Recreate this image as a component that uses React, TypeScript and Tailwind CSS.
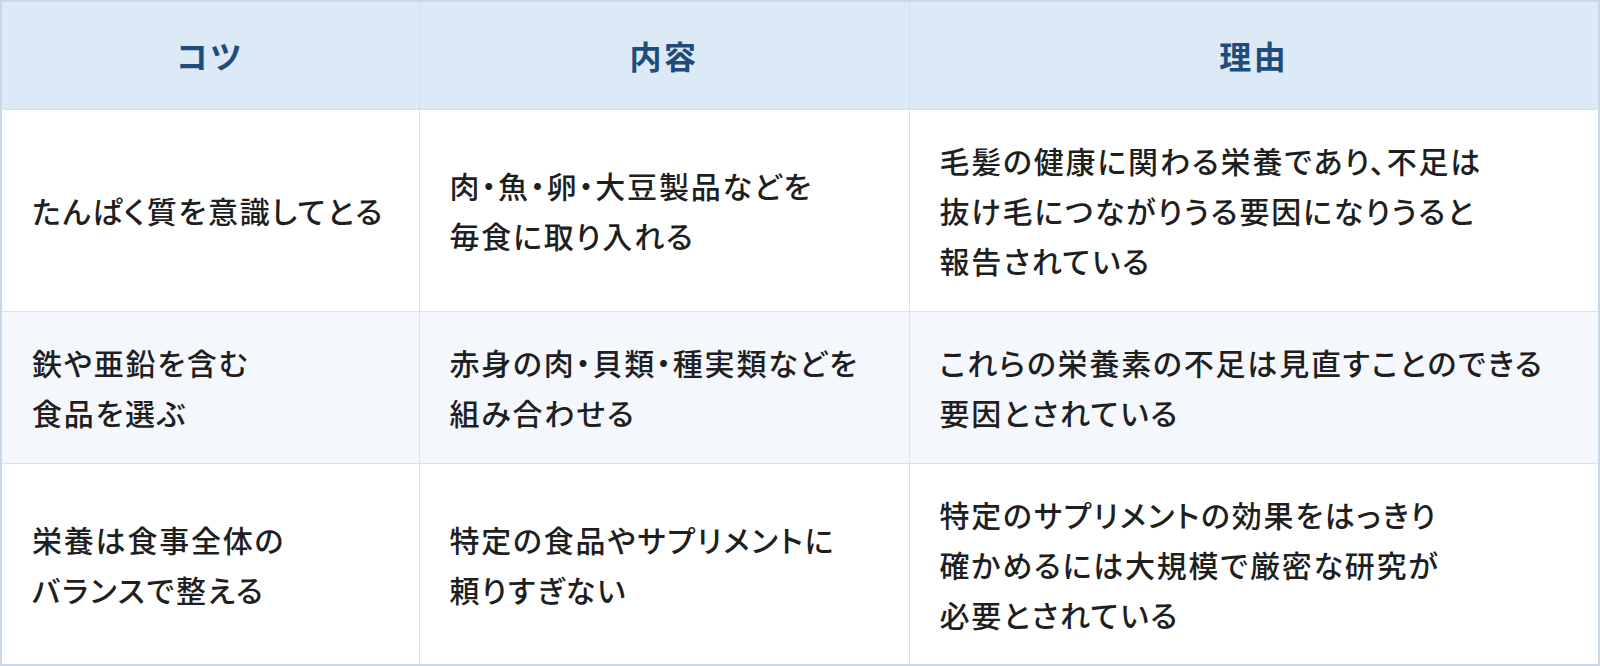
import React from 'react';

const rows: { tip: string[]; detail: string[]; reason: string[] }[] = [
  {
    tip: ['たんぱく質を意識してとる'],
    detail: ['肉・魚・卵・大豆製品などを', '毎食に取り入れる'],
    reason: ['毛髪の健康に関わる栄養であり、不足は', '抜け毛につながりうる要因になりうると', '報告されている'],
  },
  {
    tip: ['鉄や亜鉛を含む', '食品を選ぶ'],
    detail: ['赤身の肉・貝類・種実類などを', '組み合わせる'],
    reason: ['これらの栄養素の不足は見直すことのできる', '要因とされている'],
  },
  {
    tip: ['栄養は食事全体の', 'バランスで整える'],
    detail: ['特定の食品やサプリメントに', '頼りすぎない'],
    reason: ['特定のサプリメントの効果をはっきり', '確かめるには大規模で厳密な研究が', '必要とされている'],
  },
];

const Lines = ({ lines }: { lines: string[] }) => (
  <>
    {lines.map((l, i) => (
      <React.Fragment key={i}>
        {i > 0 && <br />}
        {l}
      </React.Fragment>
    ))}
  </>
);

export default function App() {
  const cell = 'border border-[#d6e3f0] px-[30px] align-middle whitespace-nowrap';
  return (
    <div className="w-[1600px] h-[666px] bg-white font-['Noto_Sans_CJK_JP',sans-serif] [font-feature-settings:'palt']">
      <table className="w-full h-full table-fixed border-collapse border-2 border-[#c6d8ea]">
        <colgroup>
          <col className="w-[418px]" />
          <col className="w-[490px]" />
          <col />
        </colgroup>
        <thead>
          <tr className="h-[108px] bg-[#dce9f6]">
            {['コツ', '内容', '理由'].map((h) => (
              <th key={h} className="border border-[#d0e0f0] text-center text-[32px] font-bold text-[#1e4d7b] tracking-[0.08em]">
                {h}
              </th>
            ))}
          </tr>
        </thead>
        <tbody className="text-[30px] leading-[50px] font-medium text-[#1f1f1f] tracking-[0.06em]">
          {rows.map((r, i) => (
            <tr key={i} className={i === 1 ? 'h-[152px] bg-[#f4f8fd]' : 'h-[202px] bg-white'}>
              <td className={cell}>
                <Lines lines={r.tip} />
              </td>
              <td className={cell}>
                <Lines lines={r.detail} />
              </td>
              <td className={cell}>
                <Lines lines={r.reason} />
              </td>
            </tr>
          ))}
        </tbody>
      </table>
    </div>
  );
}
